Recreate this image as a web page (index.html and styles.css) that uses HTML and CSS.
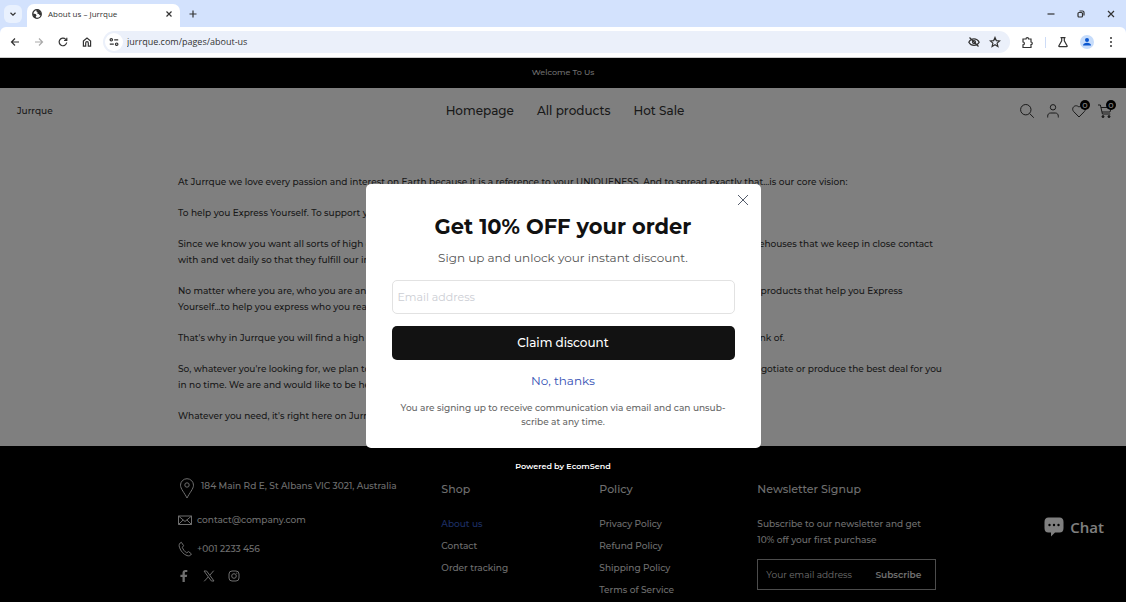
FILE: index.html
```html
<!DOCTYPE html>
<html lang="en">
<head>
  <meta charset="UTF-8" />
  <meta name="viewport" content="width=device-width, initial-scale=1.0" />
  <title>About us – Jurrque</title>
  <link rel="stylesheet" href="styles.css">
</head>
<body>
  <!-- Browser window -->
  <div class="browser">
    <div class="tab-strip">
      <button class="tab-search" aria-label="Search tabs">
        <svg width="8" height="8" viewBox="0 0 8 8"><path d="M1.5 2.8 4 5.2l2.5-2.4" /></svg>
      </button>
      <div class="tab">
        <svg class="globe" width="10" height="10" viewBox="0 0 10 10"><circle cx="5" cy="5" r="4.3" /><path class="land" d="M1 4.500 3.600 5l1 1.200-.8 1.200.2 1.900C2.200 8.800.800 7.200 1 4.500zM4.600.700l-.4 1.500 1.400 1-.4 1.300 1.500.400 1 1.300 1.600.2C9.600 3 7.500.600 4.600.700z" /></svg>
        <span class="tab-title">About us – Jurrque</span>
        <button class="tab-close" aria-label="Close tab">
          <svg width="8" height="8" viewBox="0 0 8 8"><path d="M1.500 1.500l5 5m0-5l-5 5" /></svg>
        </button>
      </div>
      <button class="new-tab" aria-label="New tab">
        <svg width="10" height="10" viewBox="0 0 10 10"><path d="M5 1.500v7M1.500 5h7" /></svg>
      </button>
      <div class="window-controls">
        <button aria-label="Minimize"><svg width="10" height="10" viewBox="0 0 10 10"><path d="M1.500 5h7" /></svg></button>
        <button aria-label="Restore"><svg width="10" height="10" viewBox="0 0 10 10"><rect x="2" y="3.500" width="4.500" height="4.500" rx="1" /><path d="M3.500 2h3A1.500 1.500 0 0 1 8 3.500v3" /></svg></button>
        <button aria-label="Close"><svg width="10" height="10" viewBox="0 0 10 10"><path d="M2 2l6 6m0-6L2 8" /></svg></button>
      </div>
    </div>
    <div class="toolbar">
      <div class="nav-buttons">
        <button aria-label="Back"><svg width="12" height="12" viewBox="0 0 12 12"><path d="M10 6H2.500M6 2.500 2.500 6 6 9.500" /></svg></button>
        <button class="faded" aria-label="Forward"><svg width="12" height="12" viewBox="0 0 12 12"><path d="M2 6h7.500M6 2.500 9.500 6 6 9.500" /></svg></button>
        <button aria-label="Reload"><svg width="12" height="12" viewBox="0 0 12 12"><path d="M9.700 6.500A3.800 3.800 0 1 1 8.700 3.300L9.600 4.300M9.800 1.800v2.700H7.100" /></svg></button>
        <button aria-label="Home"><svg width="12" height="12" viewBox="0 0 12 12"><path d="M2.400 5 6 2.100 9.600 5v5.200H7.300V7a1.300 1.300 0 0 0-2.600 0v3.200H2.400z" /></svg></button>
      </div>
      <div class="address">
        <button class="site-info" aria-label="Site information"><svg width="12" height="12" viewBox="0 0 12 12"><circle cx="3.300" cy="3.800" r="1.200" /><path d="M6.200 3.800h4M1.800 8.200h4" /><circle cx="8.700" cy="8.200" r="1.200" /></svg></button>
        <input class="url" type="text" aria-label="Address" value="jurrque.com/pages/about-us" />
        <button aria-label="Third-party cookies blocked"><svg width="12" height="12" viewBox="0 0 12 12"><path d="M.8 6.200C2 3.900 4 2.800 6 2.800s4 1.100 5.200 3.400C10 8.300 8 9.400 6 9.400S2 8.300.8 6.200z" /><circle cx="6" cy="6.100" r="1.500" /><path d="M1.500 1.500l9 9" /></svg></button>
        <button aria-label="Bookmark"><svg width="12" height="12" viewBox="0 0 12 12"><path d="M6 1.500l1.300 3.100 3.300.3-2.500 2.200.8 3.300L6 8.700l-2.900 1.700.8-3.300-2.500-2.200 3.300-.3z" /></svg></button>
      </div>
      <div class="tools">
        <button aria-label="Extensions"><svg width="13" height="13" viewBox="0 0 13 13"><path d="M2 3h3a1.300 1.300 0 0 1 2.600 0H10v3a1.300 1.300 0 0 1 0 2.600v2.900H2V8.800a1.400 1.400 0 0 0 0-2.800z" /></svg></button>
        <span class="divider"></span>
        <button aria-label="Labs"><svg width="12" height="12" viewBox="0 0 12 12"><path d="M3.500 1.600h5M4.700 1.600v3.200L1.800 9.900q-.2.700.6.700h7.200q.8 0 .6-.7L7.300 4.800V1.600" /></svg></button>
        <button class="profile" aria-label="Profile"><svg width="14" height="14" viewBox="0 0 14 14"><circle class="disc" cx="7" cy="7" r="7" /><circle class="person" cx="7" cy="4.900" r="2" /><path class="person" d="M3 10.500c0-2 2-2.800 4-2.800s4 .8 4 2.800z" /></svg></button>
        <button class="more" aria-label="Menu"><svg width="12" height="12" viewBox="0 0 12 12"><circle cx="6" cy="2" r="1" /><circle cx="6" cy="6" r="1" /><circle cx="6" cy="10" r="1" /></svg></button>
      </div>
    </div>
  </div>

  <div class="page">
    <div class="announcement">Welcome To Us</div>

    <header class="header">
      <a class="logo" href="#">Jurrque</a>
      <nav class="menu">
        <a href="#">Homepage</a>
        <a href="#">All products</a>
        <a href="#">Hot Sale</a>
      </nav>
      <div class="header-icons">
        <a href="#" aria-label="Search"><svg width="16" height="16" viewBox="0 0 16 16"><circle cx="6.800" cy="6.700" r="5.200" /><path d="M10.600 10.500l4.200 4.200" /></svg></a>
        <a href="#" aria-label="Account"><svg width="16" height="16" viewBox="0 0 16 16"><circle cx="8" cy="4.300" r="2.700" /><path d="M2.700 14.500v-1.300c0-2 1.200-3.200 3-3.200h4.600c1.800 0 3 1.200 3 3.200v1.300" /></svg></a>
        <a href="#" aria-label="Wishlist"><svg width="16" height="16" viewBox="0 0 16 16"><path d="M8 14 2.700 8.600C-.4 5.200 4.200.400 8 4.100c3.800-3.700 8.400 1.100 5.300 4.500z" /></svg><span class="count">0</span></a>
        <a href="#" aria-label="Cart"><svg width="16" height="16" viewBox="0 0 16 16"><path d="M1 2h2.400l2 9h7.900M4 4.500h10.300L13 9H5" /><circle class="wheel" cx="6" cy="13.600" r="1" /><circle class="wheel" cx="12" cy="13.600" r="1" /></svg><span class="count">0</span></a>
      </div>
    </header>

    <main class="content">
      <p>At Jurrque we love every passion and interest on Earth because it is a reference to your UNIQUENESS. And to spread exactly that...is our core vision:</p>
      <p>To help you Express Yourself. To support you in whatever you love.</p>
      <p>Since we know you want all sorts of high quality products, we are always in touch with a great many wholesalers and larger warehouses that we keep in close contact<br>with and vet daily so that they fulfill our important standards.</p>
      <p>No matter where you are, who you are and what you are passionate about we want to be able to constantly provide you all with products that help you Express<br>Yourself...to help you express who you really are!</p>
      <p>That's why in Jurrque you will find a high quality collection for every single passion, profession, craft and hobby you can even think of.</p>
      <p>So, whatever you're looking for, we plan to have it there for you. And if it's not, hit us up today and let us know, so that we can negotiate or produce the best deal for you<br>in no time. We are and would like to be here for YOU for a lifetime.</p>
      <p>Whatever you need, it's right here on Jurrque.</p>
    </main>

    <footer class="footer">
      <div class="footer-grid">
        <div class="col contact">
          <p class="address-line"><svg width="18" height="21" viewBox="0 0 18 21"><path d="M9 20C6.500 15 2.500 10.700 2.500 7.200a6.500 6.500 0 0 1 13 0c0 3.500-4 7.800-6.500 12.800z" /><circle cx="9" cy="7" r="2.200" /></svg>184 Main Rd E, St Albans VIC 3021, Australia</p>
          <p><svg width="14" height="14" viewBox="0 0 14 14"><path d="M.5 3h13v8.500H.5zM.5 3 7 8.500 13.500 3M.5 11.500l4.700-4.600m8.300 4.600L8.800 6.900" /></svg><a href="#">contact@company.com</a></p>
          <p><svg width="14" height="16" viewBox="0 0 14 16"><path d="M3.400 1.300C1.300 2 .7 4 1.400 6.200c1.300 4 4.300 7.200 7.600 8.400 2 .7 3.800 0 4.400-1.700L10.600 10.600 8.700 11.800C6.700 10.700 5 8.500 4.300 6.300L5.600 4.700z" /></svg>+001 2233 456</p>
          <div class="social">
            <a href="#" aria-label="Facebook"><svg width="12" height="12" viewBox="0 0 12 12"><path class="solid" d="M4.500 12V6.900H2.400V4.700h2.100V3C4.500 1 5.600 0 7.400 0h1.900v2.100H8c-1 0-1.200.5-1.200 1.200v1.400h2.400l-.4 2.200h-2V12z" /></svg></a>
            <a href="#" aria-label="X"><svg width="12" height="12" viewBox="0 0 12 12"><path d="M1 1h2.600L11 11H8.400zM10.700.7 6.900 5.100M5.200 7 1.200 11.300" /></svg></a>
            <a href="#" aria-label="Instagram"><svg width="12" height="12" viewBox="0 0 12 12"><rect x="1" y="1" width="10" height="10" rx="3" /><circle cx="6" cy="6" r="2.300" /><circle class="solid" cx="8.800" cy="3.200" r=".6" /></svg></a>
          </div>
        </div>
        <div class="col">
          <h3>Shop</h3>
          <ul>
            <li><a class="active" href="#">About us</a></li>
            <li><a href="#">Contact</a></li>
            <li><a href="#">Order tracking</a></li>
          </ul>
        </div>
        <div class="col">
          <h3>Policy</h3>
          <ul>
            <li><a href="#">Privacy Policy</a></li>
            <li><a href="#">Refund Policy</a></li>
            <li><a href="#">Shipping Policy</a></li>
            <li><a href="#">Terms of Service</a></li>
          </ul>
        </div>
        <div class="col">
          <h3>Newsletter Signup</h3>
          <p class="newsletter-text">Subscribe to our newsletter and get<br>10% off your first purchase</p>
          <form class="newsletter">
            <input type="email" placeholder="Your email address" aria-label="Your email address" />
            <button type="button">Subscribe</button>
          </form>
        </div>
      </div>
    </footer>

    <button class="chat">
      <svg width="20" height="20" viewBox="0 0 20 20"><path class="bubble" d="M4.500.5h11Q19.500.5 19.500 5v6q0 4.500-4 4.500H11L7 19.500v-4H4.500Q.5 15.500.5 11V5Q.5.5 4.500.5z" /><circle cx="5.500" cy="8" r="1.200" /><circle cx="10" cy="8" r="1.200" /><circle cx="14.500" cy="8" r="1.200" /></svg>
      Chat
    </button>

    <!-- Discount popup -->
    <div class="overlay">
      <div class="popup" role="dialog" aria-labelledby="popupTitle">
        <button class="popup-close" aria-label="Close"><svg width="12" height="12" viewBox="0 0 12 12"><path d="M1 1l10 10M11 1 1 11" /></svg></button>
        <h2 id="popupTitle">Get 10% OFF your order</h2>
        <p class="subtitle">Sign up and unlock your instant discount.</p>
        <input class="popup-email" type="email" placeholder="Email address" aria-label="Email address" />
        <button class="claim">Claim discount</button>
        <button class="decline">No, thanks</button>
        <p class="terms">You are signing up to receive communication via email and can unsub-<br>scribe at any time.</p>
      </div>
      <a class="powered" href="#">Powered by EcomSend</a>
    </div>
  </div>
</body>
</html>
```
FILE: styles.css
```css
* {
  box-sizing: border-box;
}

body {
  margin: 0;
  height: 100vh;
  display: flex;
  flex-direction: column;
  overflow: hidden;
  font-family: Montserrat, Inter, sans-serif;
  font-size: 9px;
  font-weight: 500;
  line-height: 16px;
  color: #333;
}

button,
input {
  font: inherit;
  color: inherit;
  border: none;
  background: none;
  padding: 0;
}

a {
  color: inherit;
  text-decoration: none;
}

h2,
h3,
p,
ul {
  margin: 0;
  padding: 0;
}

ul {
  list-style: none;
}

svg {
  display: block;
  flex-shrink: 0;
  fill: none;
  stroke: currentColor;
}

/* Browser window */
.browser {
  background: #d3e2fd;
  color: #333;
  font-family: "Open Sans", "Noto Sans", sans-serif;
  font-weight: 400;
}

.browser svg {
  stroke-width: 1.2;
}

.tab-strip {
  display: flex;
  align-items: center;
  height: 27px;
}

.tab-search {
  width: 18px;
  height: 18px;
  margin-left: 4px;
  display: grid;
  place-items: center;
  background: #e9f1fe;
  border-radius: 6px;
}

.tab {
  display: flex;
  align-items: center;
  gap: 6px;
  align-self: flex-end;
  width: 153px;
  height: 23px;
  margin-left: 5px;
  padding: 0 7px 4px 5px;
  background: #fff;
  border-radius: 7px 7px 0 0;
}

.tab-title {
  flex: 1;
  font-size: 8px;
}

.globe .land {
  fill: currentColor;
  stroke: none;
}

.new-tab {
  margin-left: 8px;
}

.window-controls {
  display: flex;
  gap: 20px;
  margin-left: auto;
  margin-right: 10px;
}

.toolbar {
  display: flex;
  align-items: center;
  height: 31px;
  padding: 0 9px;
  background: #fff;
  border-bottom: 1px solid #ccc;
  border-radius: 6px 6px 0 0;
}

.nav-buttons {
  display: flex;
  gap: 12px;
}

.faded {
  color: #aaa;
}

.address {
  flex: 1;
  display: flex;
  align-items: center;
  gap: 9px;
  height: 22px;
  margin-left: 10px;
  padding: 0 9px 0 2px;
  background: #ebf0fa;
  border-radius: 11px;
}

.site-info {
  width: 18px;
  height: 18px;
  display: grid;
  place-items: center;
  background: #fff;
  border-radius: 50%;
}

.url {
  flex: 1;
  min-width: 0;
  margin-left: -5px;
}

.tools {
  display: flex;
  align-items: center;
  gap: 11px;
  margin-left: 11px;
}

.divider {
  width: 1px;
  height: 11px;
  background: #cddcf7;
}

.profile .disc {
  fill: #c6dcfb;
  stroke: none;
}

.profile .person {
  fill: #0b57d0;
  stroke: none;
}

.more circle {
  fill: currentColor;
  stroke: none;
}

/* Store page */
.page {
  position: relative;
  flex: 1;
  min-height: 0;
  overflow: hidden;
  background: #fff;
}

.announcement {
  padding: 6px 7px 8px;
  background: #000;
  color: #ddd;
  font-size: 8px;
  text-align: center;
}

.header {
  display: grid;
  grid-template-columns: 1fr auto 1fr;
  align-items: center;
  height: 46px;
  padding: 0 13px 0 17px;
}

.menu {
  display: flex;
  gap: 23px;
  font-size: 12px;
}

.header-icons {
  display: flex;
  gap: 10px;
  justify-self: end;
}

.header-icons a {
  position: relative;
}

.count {
  position: absolute;
  top: -3px;
  right: -3px;
  width: 10px;
  height: 10px;
  border-radius: 50%;
  background: #000;
  color: #fff;
  font-size: 8px;
  line-height: 10px;
  text-align: center;
}

.wheel {
  fill: currentColor;
}

.content {
  display: flex;
  flex-direction: column;
  gap: 15px;
  max-width: 790px;
  margin: 0 auto;
  padding: 40px 10px 22px;
}

.footer {
  padding: 32px 0;
  background: #000;
  color: #ddd;
}

.footer-grid {
  display: grid;
  grid-template-columns: 5fr 3fr 3fr 4fr;
  max-width: 790px;
  margin: 0 auto;
}

.col {
  padding: 0 10px;
}

.col h3 {
  padding: 3px 0 16px;
  font-size: 11px;
  font-weight: 500;
}

.col li {
  padding: 3px 0;
}

.contact {
  display: flex;
  flex-direction: column;
  gap: 13px;
}

.contact p {
  display: flex;
  align-items: center;
  gap: 5px;
}

.contact .address-line {
  align-items: flex-start;
}

.social {
  display: flex;
  gap: 13px;
}

.solid {
  fill: currentColor;
  stroke: none;
}

.active {
  color: #3a5fc8;
}

.newsletter-text {
  padding-top: 3px;
}

.newsletter {
  display: flex;
  justify-content: space-between;
  max-width: 179px;
  height: 31px;
  margin-top: 11px;
  padding: 0 14px 0 8px;
  border: 1px solid #999;
}

.newsletter input {
  width: 96px;
  font-weight: 400;
}

.newsletter button {
  font-weight: 600;
}

::placeholder {
  color: inherit;
  opacity: 1;
}

.chat {
  position: absolute;
  right: 22px;
  bottom: 65px;
  display: flex;
  align-items: center;
  gap: 6px;
  color: #fff;
  font-family: "Open Sans", sans-serif;
  font-size: 15px;
  font-weight: 600;
}

.chat svg {
  fill: #000;
  stroke: none;
}

.chat .bubble {
  fill: #fff;
}

/* Discount popup */
.overlay {
  position: absolute;
  inset: 0;
  display: flex;
  flex-direction: column;
  align-items: center;
  justify-content: center;
  gap: 10px;
  padding-bottom: 2px;
  background: rgba(0, 0, 0, 0.5);
}

.popup {
  position: relative;
  display: flex;
  flex-direction: column;
  width: 395px;
  max-width: 90%;
  padding: 28px 26px 19px;
  background: #fff;
  border-radius: 5px;
  text-align: center;
}

.popup-close {
  position: absolute;
  top: 10px;
  right: 12px;
  color: #555c6b;
}

.popup h2 {
  color: #111;
  font-size: 21px;
  font-weight: 700;
  line-height: 30px;
}

.subtitle {
  margin-top: 8px;
  color: #555;
  font-size: 12px;
  font-weight: 400;
}

.popup-email {
  height: 34px;
  margin-top: 14px;
  padding: 0 5px;
  border: 1px solid #e2e2e2;
  border-radius: 5px;
  font-size: 11px;
  font-weight: 400;
}

.popup-email::placeholder {
  color: #ccced4;
}

.claim {
  height: 34px;
  margin-top: 12px;
  background: #121212;
  border-radius: 5px;
  color: #fff;
  font-size: 12px;
}

.decline {
  align-self: center;
  margin-top: 13px;
  color: #334fb4;
  font-size: 12px;
  font-weight: 400;
}

.terms {
  margin-top: 12px;
  color: #666;
  line-height: 14px;
}

.powered {
  color: #fff;
  font-size: 8px;
  font-weight: 600;
}
```
